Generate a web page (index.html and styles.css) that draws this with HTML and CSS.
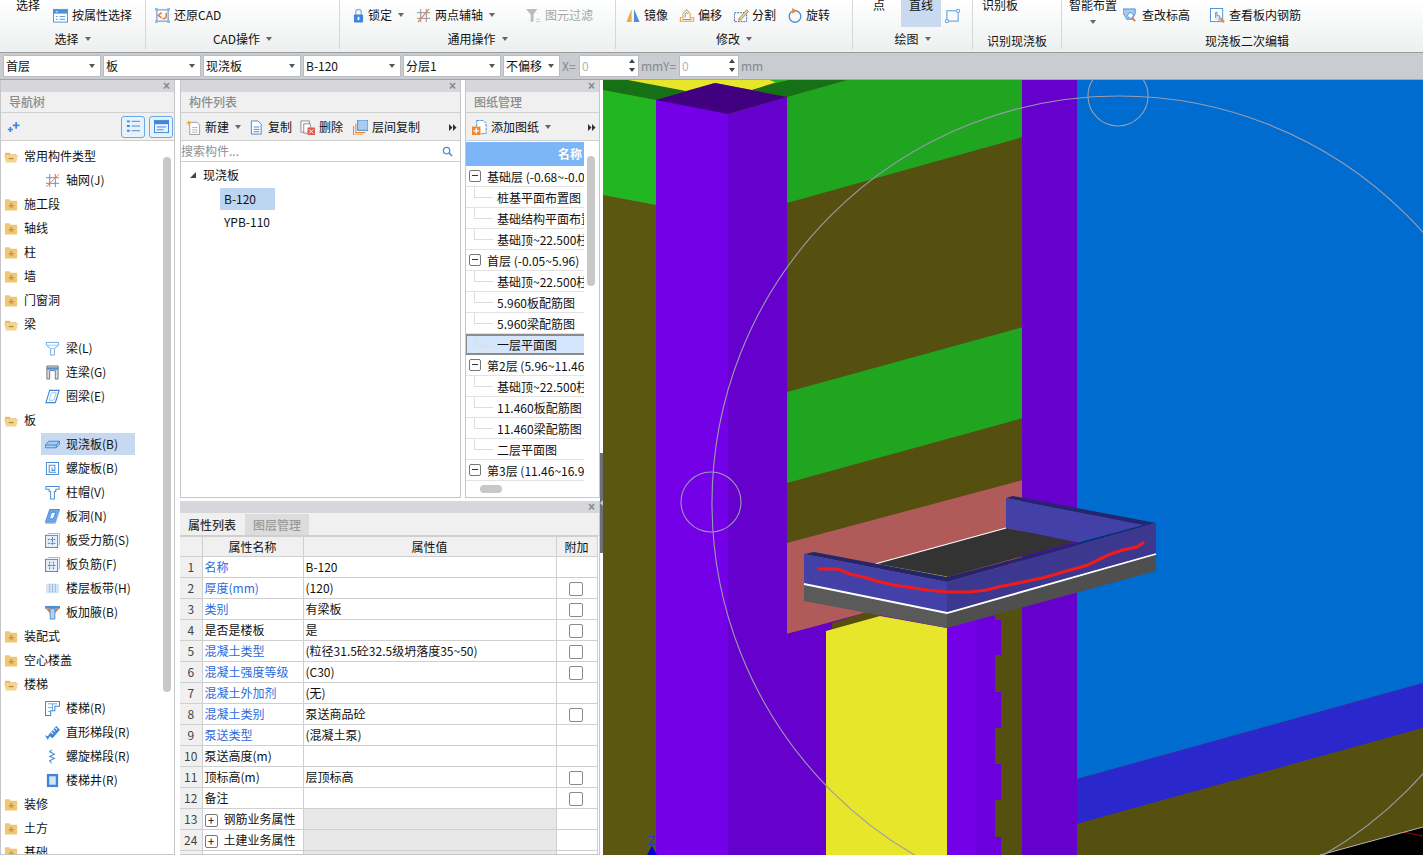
FILE: index.html
```html
<!DOCTYPE html>
<html lang="zh">
<head>
<meta charset="utf-8">
<title>现浇板</title>
<link rel="stylesheet" href="styles.css">
</head>
<body>
<svg class="defs" aria-hidden="true">
  <symbol id="fo" viewBox="0 0 16 13"><path d="M1 2.500h5l1 1.500h6v2H1z" fill="#e8bd6c"/><path d="M0 5h15l-2 8H2z" fill="#f3d491"/><path d="M5 8h5v1.400H5z" fill="#b98a35"/></symbol>
  <symbol id="fc" viewBox="0 0 16 13"><path d="M1 1h5l1 1.500h7V13H1z" fill="#efc877"/><path d="M7 5h1.600v2H10.500v1.500H8.600v2H7v-2H5V7h2z" fill="#c9973f"/></symbol>
  <symbol id="i-attr" viewBox="0 0 16 16"><rect x=".5" y="1.500" width="15" height="13.500" fill="#fff" stroke="#4a90d9"/><rect x="1" y="2" width="14" height="4" fill="#4a90d9"/><path d="M3 4h2" stroke="#fff"/><path d="M3 9h2M7 9h6M3 12h2M7 12h6" stroke="#4a90d9"/></symbol>
  <symbol id="i-cad" viewBox="0 0 16 16"><rect x="2" y="2" width="12" height="12" fill="none" stroke="#3f86d8"/><path d="M0 0h3v3H0zM13 0h3v3h-3zM0 13h3v3H0zM13 13h3v3h-3z" fill="#8cbbea"/><path d="M12 5v3.500q0 3-4 3M7 5L3.500 8 7 10.500" fill="none" stroke="#e8772a" stroke-width="1.600"/></symbol>
  <symbol id="i-lock" viewBox="0 0 12 16"><path d="M3 8V4.500a3 3 0 016 0V8" fill="none" stroke="#8cb7e4" stroke-width="1.500"/><rect x="1" y="7" width="10" height="8.500" rx="1" fill="#3f86d8"/><rect x="5" y="9.500" width="2" height="3.500" fill="#fff"/></symbol>
  <symbol id="i-axis" viewBox="0 0 16 16"><path d="M5 1v14M11 1v14M1 5h14M1 11h14" stroke="#8a8f98" stroke-width="1" fill="none"/><path d="M2 15L14 1" stroke="#ea7b45" stroke-width="1.200"/></symbol>
  <symbol id="i-filter" viewBox="0 0 16 16"><path d="M0 1h12L8 7v7l-3 1V7z" fill="#b9bcbf"/><path d="M11 12h4M11 14.500h4" stroke="#c8cacc"/></symbol>
  <symbol id="i-mirror" viewBox="0 0 16 16"><path d="M6.500 1v14H1z" fill="#f0ab3a"/><path d="M9 1v14h6z" fill="#4a90d9"/></symbol>
  <symbol id="i-offset" viewBox="0 0 18 16"><path d="M1.500 14.500v-4h3V6l4-4.500 4 4.500v4.500h4v4z" fill="none" stroke="#f0a030" stroke-width="1.200"/><path d="M4 12.500h10M7 10V6.500l1.500-2 2 2" fill="none" stroke="#4a90d9"/></symbol>
  <symbol id="i-split" viewBox="0 0 16 16"><rect x="1" y="5" width="13" height="9.500" fill="none" stroke="#3d5f92" stroke-dasharray="2 1"/><path d="M6 11L14 2l2 1.500L8 12.500 5.500 13z" fill="#f3d491" stroke="#77695a" stroke-width=".7"/></symbol>
  <symbol id="i-rotate" viewBox="0 0 16 16"><circle cx="8" cy="9" r="6.200" fill="none" stroke="#4a90d9" stroke-width="1.400"/><path d="M5 0l5 3-5 3z" fill="#ef8a2c"/></symbol>
  <symbol id="i-rect" viewBox="0 0 16 16"><rect x="2" y="3" width="12" height="11" fill="none" stroke="#4a90d9"/><path d="M.5 12.500h3v3h-3zM12.500 1.500h3v3h-3z" fill="#fff" stroke="#4a90d9" stroke-width=".8"/></symbol>
  <symbol id="i-check" viewBox="0 0 16 16"><path d="M0 1h13v5l-3 6H4L0 5z" fill="#a9c8ec" stroke="#4a90d9"/><circle cx="8" cy="8" r="3" fill="#fff" stroke="#4a90d9"/><path d="M10 11l3 3" stroke="#e8772a" stroke-width="2"/></symbol>
  <symbol id="i-view" viewBox="0 0 16 16"><rect x=".5" y=".5" width="13" height="14" fill="#fff" stroke="#4a90d9"/><path d="M6 11V4.500h1.500V8l3 .5V12l-2 2.500" fill="#d9e8f7" stroke="#6f8fb2"/><path d="M11 11l4 4" stroke="#ef8a2c" stroke-width="2.500"/></symbol>
  <symbol id="i-star" viewBox="0 0 18 14"><path d="M10 1h2v3h3v2h-3v3h-2V6H7V4h3z" fill="#3f86d8"/><path d="M3 7h2v2h2v2H5v2H3v-2H1V9h2z" fill="#3f86d8"/></symbol>
  <symbol id="i-list" viewBox="0 0 16 16"><path d="M1 2.500h3M1 7.500h3M1 12.500h3" stroke="#3f86d8" stroke-width="2"/><path d="M6 2.500h9M6 7.500h9M6 12.500h9" stroke="#3f86d8"/></symbol>
  <symbol id="i-win" viewBox="0 0 16 16"><rect x=".5" y="1.500" width="15" height="13" fill="none" stroke="#3f86d8"/><rect x="1" y="2" width="14" height="3.500" fill="#3f86d8"/><path d="M3 8.500h10M3 11.500h7" stroke="#3f86d8"/></symbol>
  <symbol id="i-new" viewBox="0 0 16 16"><path d="M4 2.500h8l2.500 3V15.500H4z" fill="#fff" stroke="#9a9a9a"/><path d="M6.500 8h6M6.500 10.500h6M6.500 13h6" stroke="#b5b5b5"/><path d="M3 0l.8 2.200L6 3 3.800 3.800 3 6l-.8-2.200L0 3l2.200-.8z" fill="#f0a030"/></symbol>
  <symbol id="i-copy" viewBox="0 0 16 16"><path d="M2.500 1h7l3.500 3.500v10.500H2.500z" fill="#fff" stroke="#3f86d8"/><path d="M5 7.500h6M5 10h6M5 12.500h6" stroke="#3f86d8"/></symbol>
  <symbol id="i-del" viewBox="0 0 16 16"><path d="M1 1h9v12H1z" fill="#fff" stroke="#8a8a8a"/><path d="M4 4h7v10H4z" fill="#fff" stroke="#8a8a8a"/><rect x="8" y="8" width="8" height="8" fill="#e05a50"/><path d="M9.800 10l4.400 4.400M14.200 10l-4.400 4.400" stroke="#fff"/></symbol>
  <symbol id="i-floor" viewBox="0 0 16 16"><rect x="5" y="0" width="11" height="11" fill="#a8cdf2" stroke="#3f86d8"/><path d="M3 4v9.500h10M.5 6.500V16h10" fill="none" stroke="#ef8a2c" stroke-width="1.200"/></symbol>
  <symbol id="i-add" viewBox="0 0 16 16"><path d="M5 .5h7l3 3v11H5z" fill="#fff" stroke="#3f86d8" stroke-dasharray="3 1"/><rect x="0" y="7" width="9" height="9" fill="#ef8a2c"/><path d="M4.500 8.500v6M1.500 11.500h6" stroke="#fff" stroke-width="1.400"/></symbol>
  <symbol id="i-more" viewBox="0 0 8 7"><path d="M0 0l3.500 3.500L0 7zM4 0l3.500 3.500L4 7z" fill="#333"/></symbol>
  <symbol id="t-grid" viewBox="0 0 16 16"><path d="M5 1v14M11 1v14M1 5h14M1 11h14" stroke="#4a90d9" fill="none"/><path d="M1 15L15 1" stroke="#ea8a5a"/></symbol>
  <symbol id="t-beam" viewBox="0 0 16 16"><path d="M1.500 1.500h13v3L10 8v7H6V8L1.500 4.500z" fill="#fff" stroke="#6aa5e4"/><path d="M2 4.500h12M6 8h4" stroke="#9cc4ee"/></symbol>
  <symbol id="t-lintel" viewBox="0 0 16 16"><path d="M2 15V1h12v14h-3V6H5v9z" fill="#d7dadd" stroke="#6f7780"/><rect x="2" y="2.500" width="12" height="2.500" fill="#4a90d9"/></symbol>
  <symbol id="t-ring" viewBox="0 0 16 16"><path d="M5 1.500h10L11 14.500H1z" fill="#fff" stroke="#3f86d8" stroke-width="1.200"/><path d="M7 4h5l-2.500 8h-5z" fill="none" stroke="#9cc4ee"/></symbol>
  <symbol id="t-slab" viewBox="0 0 16 16"><path d="M4 4.500h11.500v3L12 11.500H.5v-3z" fill="#a9cdf1" stroke="#3f86d8"/><path d="M.5 8.500H12l3.500-4M12 8.500v3" fill="none" stroke="#3f86d8"/></symbol>
  <symbol id="t-spiral" viewBox="0 0 16 16"><path d="M1.500 1.500h13v13h-13zM12 12H4.500V4.500h6V10H7.500V7" fill="none" stroke="#4a90d9" stroke-width="1.100"/></symbol>
  <symbol id="t-cap" viewBox="0 0 16 16"><path d="M1 1.500h14v3h-3.500V7H10v8H6V7H4.500V4.500H1z" fill="#fff" stroke="#4a90d9" stroke-width="1.100"/></symbol>
  <symbol id="t-hole" viewBox="0 0 16 16"><path d="M5 .5h10.500L11 14H.5z" fill="#6ea8e6" stroke="#3f86d8"/><path d="M7 3.500h4.500L9 10.500H4.500z" fill="#fff" stroke="#3f86d8"/><path d="M.5 14v1.500H11l4.500-14" fill="none" stroke="#9cc4ee"/></symbol>
  <symbol id="t-bar1" viewBox="0 0 16 16"><path d="M3 .5h12.500V13" fill="none" stroke="#8cbbea"/><rect x=".5" y="2.500" width="13" height="13" fill="#e4effa" stroke="#3f86d8"/><path d="M3 7h8M3 11h8M8 4.500v8" stroke="#3f6ea8" stroke-dasharray="2 1"/></symbol>
  <symbol id="t-bar2" viewBox="0 0 16 16"><path d="M3 .5h12.500V13" fill="none" stroke="#8cbbea"/><rect x=".5" y="2.500" width="13" height="13" fill="#e4effa" stroke="#3f86d8"/><path d="M5 5v8M9 5v8M3 9h8" stroke="#3f6ea8" stroke-dasharray="2 1"/></symbol>
  <symbol id="t-band" viewBox="0 0 16 16"><rect x="1" y="3" width="14" height="10" fill="#d6e5f6"/><path d="M5 3v10M8 3v10M11 3v10" stroke="#5f93cd" stroke-dasharray="1 1"/></symbol>
  <symbol id="t-haunch" viewBox="0 0 16 16"><path d="M0 1h16v3H0z" fill="#4a90d9"/><path d="M5.500 4v11h5V4z" fill="#b6d3f1" stroke="#4a90d9"/><path d="M1 4h4.500v5zM15 4h-4.500v5z" fill="#ef7c1c"/></symbol>
  <symbol id="t-stair" viewBox="0 0 16 16"><path d="M.5 15.500V.5h15v5h-5v5H6v5z" fill="#fff" stroke="#3f86d8" stroke-width="1.100"/><path d="M3 3h10M8 3v8M3 7h5M3 11h3" stroke="#6aa5e4"/></symbol>
  <symbol id="t-run" viewBox="0 0 16 16"><path d="M0 11l3 1 2-3 7-8 4 4-8 9-3-2-2 4z" fill="#3f86d8"/><path d="M6.500 7.500l2 2M8.500 5l2 2M11 3l2 2" stroke="#fff" stroke-width="1.200"/></symbol>
  <symbol id="t-spst" viewBox="0 0 16 16"><path d="M7 1L5 3l5 2.500-5 2.500 5 2-5 2.500L7 15" fill="none" stroke="#3f86d8" stroke-width="1.100"/></symbol>
  <symbol id="t-well" viewBox="0 0 16 16"><rect x="2" y="1" width="12" height="14" fill="#3f86d8"/><rect x="4.500" y="3.500" width="7" height="9" fill="#d6e5f6"/></symbol>
</svg>

<div class="app">
  <header class="ribbon">
    <section class="group g1">
      <div class="body">
        <span class="big">选择</span>
        <span class="item mi13"><svg class="ic"><use href="#i-attr"/></svg>按属性选择</span>
      </div>
      <div class="label">选择<i class="arrow"></i></div>
    </section>
    <section class="group g2">
      <div class="body"><span class="item"><svg class="ic"><use href="#i-cad"/></svg>还原CAD</span></div>
      <div class="label">CAD操作<i class="arrow"></i></div>
    </section>
    <section class="group g3">
      <div class="body">
        <span class="item"><svg class="ic narrow"><use href="#i-lock"/></svg>锁定<i class="arrow a2"></i></span>
        <span class="item mi12"><svg class="ic"><use href="#i-axis"/></svg>两点辅轴<i class="arrow a2"></i></span>
        <span class="item mi31 off"><svg class="ic"><use href="#i-filter"/></svg>图元过滤</span>
      </div>
      <div class="label">通用操作<i class="arrow"></i></div>
    </section>
    <section class="group g4">
      <div class="body">
        <span class="item tight"><svg class="ic wide"><use href="#i-mirror"/></svg>镜像</span>
        <span class="item tight mi11"><svg class="ic wide"><use href="#i-offset"/></svg>偏移</span>
        <span class="item tight mi11"><svg class="ic wide"><use href="#i-split"/></svg>分割</span>
        <span class="item tight mi11"><svg class="ic wide"><use href="#i-rotate"/></svg>旋转</span>
      </div>
      <div class="label">修改<i class="arrow"></i></div>
    </section>
    <section class="group g5">
      <div class="body">
        <span class="big">点</span>
        <span class="big active">直线</span>
        <span class="item mi4"><svg class="ic"><use href="#i-rect"/></svg></span>
      </div>
      <div class="label">绘图<i class="arrow"></i></div>
    </section>
    <section class="group g6">
      <div class="body"><span class="big">识别板</span></div>
      <div class="label low">识别现浇板</div>
    </section>
    <section class="group g7">
      <div class="body">
        <span class="big stack">智能布置<i class="arrow"></i></span>
        <span class="item mi6"><svg class="ic"><use href="#i-check"/></svg>查改标高</span>
        <span class="item mi20"><svg class="ic"><use href="#i-view"/></svg>查看板内钢筋</span>
      </div>
      <div class="label low shift">现浇板二次编辑</div>
    </section>
  </header>

  <div class="toolbar">
    <div class="select">首层<i class="arrow"></i></div>
    <div class="select">板<i class="arrow"></i></div>
    <div class="select">现浇板<i class="arrow"></i></div>
    <div class="select">B-120<i class="arrow"></i></div>
    <div class="select">分层1<i class="arrow"></i></div>
    <div class="select short">不偏移<i class="arrow"></i></div>
    <span class="tb-label lx">X=</span>
    <div class="spin">0<span class="spin-arrows"><i class="up"></i><i class="down"></i></span></div>
    <span class="tb-label ly">mmY=</span>
    <div class="spin">0<span class="spin-arrows"><i class="up"></i><i class="down"></i></span></div>
    <span class="tb-label">mm</span>
  </div>

  <main class="main">
    <aside class="panel nav">
      <div class="strip"><span class="close">×</span></div>
      <div class="phead">导航树</div>
      <div class="ptools nav-tools">
        <svg class="stars"><use href="#i-star"/></svg>
        <span class="tbtn"><svg class="ic"><use href="#i-list"/></svg></span>
        <span class="tbtn"><svg class="ic"><use href="#i-win"/></svg></span>
      </div>
      <div class="nav-body">
        <ul class="tree">
          <li class="l0"><svg class="fold"><use href="#fo"/></svg>常用构件类型</li>
          <li class="l1"><svg class="ic"><use href="#t-grid"/></svg>轴网(J)</li>
          <li class="l0"><svg class="fold"><use href="#fc"/></svg>施工段</li>
          <li class="l0"><svg class="fold"><use href="#fc"/></svg>轴线</li>
          <li class="l0"><svg class="fold"><use href="#fc"/></svg>柱</li>
          <li class="l0"><svg class="fold"><use href="#fc"/></svg>墙</li>
          <li class="l0"><svg class="fold"><use href="#fc"/></svg>门窗洞</li>
          <li class="l0"><svg class="fold"><use href="#fo"/></svg>梁</li>
          <li class="l1"><svg class="ic"><use href="#t-beam"/></svg>梁(L)</li>
          <li class="l1"><svg class="ic"><use href="#t-lintel"/></svg>连梁(G)</li>
          <li class="l1"><svg class="ic"><use href="#t-ring"/></svg>圈梁(E)</li>
          <li class="l0"><svg class="fold"><use href="#fo"/></svg>板</li>
          <li class="l1 sel"><svg class="ic"><use href="#t-slab"/></svg>现浇板(B)</li>
          <li class="l1"><svg class="ic"><use href="#t-spiral"/></svg>螺旋板(B)</li>
          <li class="l1"><svg class="ic"><use href="#t-cap"/></svg>柱帽(V)</li>
          <li class="l1"><svg class="ic"><use href="#t-hole"/></svg>板洞(N)</li>
          <li class="l1"><svg class="ic"><use href="#t-bar1"/></svg>板受力筋(S)</li>
          <li class="l1"><svg class="ic"><use href="#t-bar2"/></svg>板负筋(F)</li>
          <li class="l1"><svg class="ic"><use href="#t-band"/></svg>楼层板带(H)</li>
          <li class="l1"><svg class="ic"><use href="#t-haunch"/></svg>板加腋(B)</li>
          <li class="l0"><svg class="fold"><use href="#fc"/></svg>装配式</li>
          <li class="l0"><svg class="fold"><use href="#fc"/></svg>空心楼盖</li>
          <li class="l0"><svg class="fold"><use href="#fo"/></svg>楼梯</li>
          <li class="l1"><svg class="ic"><use href="#t-stair"/></svg>楼梯(R)</li>
          <li class="l1"><svg class="ic"><use href="#t-run"/></svg>直形梯段(R)</li>
          <li class="l1"><svg class="ic"><use href="#t-spst"/></svg>螺旋梯段(R)</li>
          <li class="l1"><svg class="ic"><use href="#t-well"/></svg>楼梯井(R)</li>
          <li class="l0"><svg class="fold"><use href="#fc"/></svg>装修</li>
          <li class="l0"><svg class="fold"><use href="#fc"/></svg>土方</li>
          <li class="l0"><svg class="fold"><use href="#fc"/></svg>基础</li>
        </ul>
        <div class="vtrack"><div class="vthumb"></div></div>
      </div>
    </aside>

    <div class="mid">
      <div class="mid-top">
        <section class="panel comp">
          <div class="strip"><span class="close">×</span></div>
          <div class="phead">构件列表</div>
          <div class="ptools comp-tools">
            <span class="item"><svg class="ic"><use href="#i-new"/></svg>新建<i class="arrow a2"></i></span>
            <span class="item"><svg class="ic"><use href="#i-copy"/></svg>复制</span>
            <span class="item"><svg class="ic"><use href="#i-del"/></svg>删除</span>
            <span class="item last"><svg class="ic"><use href="#i-floor"/></svg>层间复制</span>
            <svg class="more"><use href="#i-more"/></svg>
          </div>
          <div class="search">搜索构件...
            <svg class="mag" viewBox="0 0 12 12"><circle cx="5" cy="5" r="3.500" fill="none" stroke="#4a90d9" stroke-width="1.400"/><path d="M7.500 7.500L11 11" stroke="#4a90d9" stroke-width="1.600"/></svg>
          </div>
          <div class="comp-tree">
            <div class="ct-root"><i class="tri"></i>现浇板</div>
            <div class="ct-item on">B-120</div>
            <div class="ct-item">YPB-110</div>
          </div>
        </section>

        <section class="panel draw">
          <div class="strip"><span class="close">×</span></div>
          <div class="phead">图纸管理</div>
          <div class="ptools draw-tools">
            <span class="item"><svg class="ic"><use href="#i-add"/></svg>添加图纸<i class="arrow a2"></i></span>
            <svg class="more"><use href="#i-more"/></svg>
          </div>
          <div class="draw-body">
            <div class="draw-main">
              <div class="draw-head">名称</div>
              <div class="dr top"><b class="mbox"></b>基础层 (-0.68~-0.05)</div>
              <div class="dr">桩基平面布置图</div>
              <div class="dr">基础结构平面布置图</div>
              <div class="dr">基础顶~22.500柱配筋图</div>
              <div class="dr top"><b class="mbox"></b>首层 (-0.05~5.96)</div>
              <div class="dr">基础顶~22.500柱配筋图</div>
              <div class="dr">5.960板配筋图</div>
              <div class="dr">5.960梁配筋图</div>
              <div class="dr cur">一层平面图</div>
              <div class="dr top"><b class="mbox"></b>第2层 (5.96~11.46)</div>
              <div class="dr">基础顶~22.500柱配筋图</div>
              <div class="dr">11.460板配筋图</div>
              <div class="dr">11.460梁配筋图</div>
              <div class="dr">二层平面图</div>
              <div class="dr top"><b class="mbox"></b>第3层 (11.46~16.96)</div>
              <div class="hthumb"></div>
            </div>
            <div class="dtrack"><div class="dthumb"></div></div>
          </div>
        </section>
      </div>

      <section class="panel props">
        <div class="strip"><span class="close">×</span></div>
        <div class="tabs"><span class="tab on">属性列表</span><span class="tab">图层管理</span></div>
        <table class="ptable">
          <colgroup><col class="c0"><col class="c1"><col class="c2"><col class="c3"></colgroup>
          <tr class="head"><th></th><th>属性名称</th><th>属性值</th><th>附加</th></tr>
          <tr><td class="n">1</td><td class="link">名称</td><td>B-120</td><td></td></tr>
          <tr><td class="n">2</td><td class="link">厚度(mm)</td><td>(120)</td><td><b class="cb"></b></td></tr>
          <tr><td class="n">3</td><td class="link">类别</td><td>有梁板</td><td><b class="cb"></b></td></tr>
          <tr><td class="n">4</td><td>是否是楼板</td><td>是</td><td><b class="cb"></b></td></tr>
          <tr><td class="n">5</td><td class="link">混凝土类型</td><td>(粒径31.5砼32.5级坍落度35~50)</td><td><b class="cb"></b></td></tr>
          <tr><td class="n">6</td><td class="link">混凝土强度等级</td><td>(C30)</td><td><b class="cb"></b></td></tr>
          <tr><td class="n">7</td><td class="link">混凝土外加剂</td><td>(无)</td><td></td></tr>
          <tr><td class="n">8</td><td class="link">混凝土类别</td><td>泵送商品砼</td><td><b class="cb"></b></td></tr>
          <tr><td class="n">9</td><td class="link">泵送类型</td><td>(混凝土泵)</td><td></td></tr>
          <tr><td class="n">10</td><td>泵送高度(m)</td><td></td><td></td></tr>
          <tr><td class="n">11</td><td>顶标高(m)</td><td>层顶标高</td><td><b class="cb"></b></td></tr>
          <tr><td class="n">12</td><td>备注</td><td></td><td><b class="cb"></b></td></tr>
          <tr><td class="n">13</td><td><b class="pbox">+</b>钢筋业务属性</td><td class="shade"></td><td></td></tr>
          <tr><td class="n">24</td><td><b class="pbox">+</b>土建业务属性</td><td class="shade"></td><td></td></tr>
          <tr><td class="n">31</td><td><b class="pbox">+</b>显示样式</td><td class="shade"></td><td></td></tr>
        </table>
      </section>
    </div>

    <div class="splitter"><div class="handle"><i></i></div></div>

    <svg class="view" viewBox="603 80 820 775" preserveAspectRatio="none">
      <rect x="603" y="80" width="820" height="775" fill="#5b5713"/>
      <rect x="787" y="80" width="236" height="775" fill="#55500f"/>
      <!-- back left floor -->
      <polygon points="603,80 628,80 686,91 656,100 603,90" fill="#167016"/>
      <polygon points="628,80 770,80 777,82 752,90 715,83 686,91" fill="#e8e62a"/>
      <polygon points="770,80 790,80 777,83" fill="#22b722"/>
      <polygon points="752,90 777,83 790,80 847,80 787,97" fill="#167016"/>
      <polygon points="603,90 656,100 656,205 603,195" fill="#22b722"/>
      <!-- back wall bands -->
      <polygon points="787,97 847,80 1023,80 1023,137 787,203" fill="#20a520"/>
      <polygon points="787,392 1023,327 1023,418 787,483" fill="#20a520"/>
      <polygon points="787,543 1023,480 1023,571 787,634" fill="#b15a5a"/>
      <!-- front column -->
      <rect x="656" y="100" width="72" height="755" fill="#7300e6"/>
      <polygon points="728,114 787,97 787,634 826,624 826,855 728,855" fill="#6600cc"/>
      <polygon points="656,100 715,83 787,97 728,114" fill="#400080"/>
      <polygon points="787,634 1023,570 1023,855 787,855" fill="#6600cc"/>
      <!-- far wall & blue -->
      <rect x="1022" y="80" width="56" height="775" fill="#6600cc"/>
      <polygon points="1077,80 1423,80 1423,683 1077,779" fill="#006ccf"/>
      <polygon points="1077,779 1423,683 1423,728 1077,824" fill="#2a27cc"/>
      <polygon points="1077,824 1423,728 1423,855 1077,855" fill="#55500f"/>
      <polygon points="1320,855 1423,827 1423,855" fill="#000"/>
      <path d="M1403 832l20 4" stroke="#b00000" stroke-width="1" fill="none"/>
      <path d="M1320 855L1423 827" stroke="#b5b5b5" stroke-width="1" fill="none"/>
      <!-- lower column -->
      <polygon points="832,623 880,608 880,616 832,630" fill="#55500f"/>
      <polygon points="826,631 880,616 947,628 947,855 826,855" fill="#e8e62a"/>
      <rect x="947" y="610" width="29" height="245" fill="#7300e6"/>
      <rect x="976" y="610" width="25" height="245" fill="#6c00dc"/>
      <rect x="1001" y="608" width="21" height="247" fill="#55500f"/>
      <path d="M995 612h6v8h-6zM995 655h6v37h-6zM995 728h6v36h-6zM995 800h6v37h-6z" fill="#55500f"/>
      <!-- circles -->
      <g fill="none" stroke="#9a9cae" stroke-width="1.100">
        <circle cx="1119" cy="503" r="407"/>
        <circle cx="711" cy="502" r="30"/>
        <circle cx="1118" cy="96" r="30"/>
      </g>
      <!-- balcony slab -->
      <polygon points="1006,498 1143,525 1075,542 1006,528" fill="#4340a8"/>
      <polygon points="1006,498 1013,496 1156,523 1143,525" fill="#25256b"/>
      <polygon points="1006,528 1075,542 947,577 875,564" fill="#333"/>
      <path d="M875 564L1006 528" stroke="#fff" stroke-width="1.200" fill="none"/>
      <path d="M875 564L947 577" stroke="#c9c850" stroke-width="1" fill="none"/>
      <polygon points="804,554 814,552 947,577 947,582" fill="#25256b"/>
      <polygon points="947,577 1143,525 1156,523 947,582" fill="#25256b"/>
      <polygon points="804,554 947,582 947,613 804,584" fill="#4340a8"/>
      <polygon points="947,582 1156,523 1156,554 947,613" fill="#3c388f"/>
      <polygon points="804,584 947,613 947,628 804,601" fill="#5a5a5a"/>
      <polygon points="947,613 1156,554 1156,571 947,628" fill="#4f4f4f"/>
      <path d="M804 584L947 613L1156 554" stroke="#fff" stroke-width="1.800" fill="none"/>
      <path d="M818 569L838 569L850 574L863 577L877 581L893 585L907 587L927 590L947 592L970 592L987 590L998 587L1013 584L1028 581L1042 578L1053 575L1070 570L1088 565L1108 555L1123 550L1137 547L1144 542" stroke="#f01c1c" stroke-width="3.200" fill="none"/>
      <!-- axis -->
      <text class="zlabel" x="648" y="845">Z</text>
      <polygon points="652,846 657,855 647,855" fill="#0000e0"/>
    </svg>
  </main>
</div>
</body>
</html>
```
FILE: styles.css
```css
* { box-sizing: border-box; }
html, body { margin: 0; padding: 0; height: 100%; overflow: hidden; }
body { font: 12px/16px "Noto Sans CJK SC", "Noto Sans", sans-serif; color: #111; background: #fff; }
.defs { display: none; }
.app { width: 1423px; height: 855px; display: flex; flex-direction: column; overflow: hidden; }
i { display: block; font-style: normal; }
b { font-weight: normal; }

/* ribbon */
.ribbon { display: flex; height: 53px; flex: none; background: linear-gradient(#fff, #edf0f0); border-bottom: 1px solid #9c9c9c; }
.group { height: 49px; border-right: 1px solid #d6d8d8; flex: none; }
.g1 { width: 146px; } .g2 { width: 194px; } .g3 { width: 276px; } .g4 { width: 237px; } .g5 { width: 120px; } .g6 { width: 89px; }
.g7 { flex: 1; border-right: 0; }
.body { height: 30px; display: flex; align-items: center; }
.g1 .body { padding-left: 16px; } .g2 .body { padding-left: 9px; } .g3 .body { padding-left: 13px; }
.g4 .body { padding-left: 9px; } .g5 .body { padding-left: 20px; } .g6 .body { padding-left: 9px; } .g7 .body { padding-left: 7px; }
.big { align-self: flex-start; line-height: 12px; margin-top: -1px; height: 28px; flex: none; }
.big.active { width: 40px; margin-left: 16px; text-align: center; background: #c8d9f0; }
.big.stack { display: flex; flex-direction: column; align-items: center; }
.big.stack .arrow { margin: 9px 0 0; }
.item { display: flex; align-items: center; gap: 4px; flex: none; }
.item.tight { gap: 3px; }
.item.off { color: #a6a6a6; }
.mi4 { margin-left: 4px; } .mi6 { margin-left: 6px; } .mi11 { margin-left: 11px; } .mi12 { margin-left: 12px; }
.mi13 { margin-left: 13px; } .mi20 { margin-left: 20px; } .mi31 { margin-left: 31px; }
.ic { width: 15px; height: 15px; flex: none; display: block; }
.ic.narrow { width: 11px; }
.ic.wide { width: 16px; }
.label { height: 19px; margin-top: -1px; display: flex; align-items: center; justify-content: center; gap: 6px; }
.label.low { padding-top: 4px; }
.label.shift { margin-left: 9px; }
.arrow { width: 0; height: 0; border: 3.500px solid transparent; border-top: 4px solid #666; border-bottom: 0; flex: none; }
.arrow.a2 { margin-left: 2px; border-width: 3px; border-top-width: 4px; border-bottom-width: 0; }

/* toolbar */
.toolbar { height: 27px; flex: none; display: flex; align-items: center; gap: 2px; padding: 0 0 1px 3px; background: #c9ccd0; border-bottom: 1px solid #a4a6a8; }
.select { width: 98px; height: 22px; background: #fff; border: 1px solid #b9bcc0; padding-left: 2px; display: flex; align-items: center; justify-content: space-between; flex: none; line-height: 20px; }
.select.short { width: 57px; }
.select .arrow { margin-right: 5px; border-width: 3px; border-top-width: 4px; border-bottom-width: 0; border-top-color: #555; }
.tb-label { color: #858890; flex: none; }
.tb-label.lx { width: 15px; }
.tb-label.ly { width: 36px; }
.spin { width: 60px; height: 22px; background: #fff; border: 1px solid #b9bcc0; padding-left: 2px; color: #b5b5b5; display: flex; align-items: center; justify-content: space-between; line-height: 20px; flex: none; }
.spin-arrows { display: flex; flex-direction: column; gap: 5px; margin-right: 3px; }
.up { width: 0; height: 0; border: 3px solid transparent; border-bottom: 4px solid #444; border-top: 0; }
.down { width: 0; height: 0; border: 3px solid transparent; border-top: 4px solid #444; border-bottom: 0; }

/* main */
.main { flex: 1; min-height: 0; display: flex; }
.panel { display: flex; flex-direction: column; background: #fff; border: 1px solid #c4c6c8; border-top: 0; overflow: hidden; }
.strip { height: 12px; flex: none; background: #d5d7da; display: flex; justify-content: flex-end; align-items: center; padding-right: 4px; }
.close { color: #85888c; font: bold 12px/12px "Liberation Sans", sans-serif; }
.phead { height: 21px; flex: none; background: #f0f0f0; border-bottom: 1px solid #cfcfcf; color: #8c8c8c; padding-left: 8px; line-height: 20px; font-weight: 500; }
.ptools { height: 28px; flex: none; background: #f0f0f0; border-bottom: 1px solid #cfcfcf; display: flex; align-items: center; padding-top: 1px; }

/* nav */
.nav { width: 175px; flex: none; }
.nav-tools { padding: 0 1px 0 6px; gap: 4px; }
.stars { width: 15px; height: 12px; margin-right: auto; }
.tbtn { width: 24px; height: 22px; border: 1px solid #6aa8ea; border-radius: 3px; background: #e8f2fc; display: flex; align-items: center; justify-content: center; }
.nav-body { flex: 1; min-height: 0; display: flex; overflow: hidden; }
.tree { list-style: none; margin: 0; padding: 3px 0 0; flex: 1; min-width: 0; }
.tree li { height: 24px; display: flex; align-items: center; white-space: nowrap; }
.l0 { padding-left: 3px; gap: 5px; }
.l1 { padding-left: 44px; gap: 6px; }
.l1.sel { background: linear-gradient(#c7d9f1, #c7d9f1) 40px 1px / 94px 22px no-repeat; }
.fold { width: 15px; height: 13px; flex: none; }
.vtrack { width: 11px; flex: none; padding-top: 16px; }
.vthumb { width: 8px; height: 535px; border-radius: 4px; background: #c8c8c8; }

/* middle */
.mid { width: 420px; flex: none; margin-left: 5px; display: flex; flex-direction: column; gap: 3px; }
.mid-top { height: 418px; flex: none; display: flex; gap: 4px; }
.comp { width: 281px; flex: none; }
.draw { flex: 1; min-width: 0; }
.comp-tools { padding-left: 5px; gap: 8px; }
.comp-tools .last { margin-left: 2px; }
.more { margin-left: auto; margin-right: 3px; flex: none; width: 8px; height: 7px; }
.search { height: 21px; flex: none; border-bottom: 1px solid #cfcfcf; color: #8f8f8f; line-height: 20px; display: flex; justify-content: space-between; align-items: center; }
.mag { width: 11px; height: 11px; margin-right: 7px; }
.comp-tree { flex: 1; padding-top: 1px; }
.ct-root { height: 24px; display: flex; align-items: center; padding-left: 9px; gap: 7px; }
.tri { width: 0; height: 0; border-style: solid; border-width: 0 0 6px 6px; border-color: transparent transparent #444 transparent; }
.ct-item { height: 24px; margin-left: 39px; line-height: 24px; padding-left: 4px; width: 55px; white-space: nowrap; }
.ct-item.on { background: #bcd5f0; height: 22px; line-height: 22px; margin-top: 1px; }
.draw-tools { padding-left: 6px; }
.draw-body { flex: 1; min-height: 0; display: flex; }
.draw-main { width: 118px; flex: none; overflow: hidden; }
.draw-head { height: 24px; margin-top: 1px; background: #7db6f8; color: #fff; font-weight: bold; text-align: right; padding-right: 2px; line-height: 24px; }
.dr { height: 21px; border-bottom: 1px solid #e2e2e2; line-height: 21px; padding-left: 31px; white-space: nowrap; overflow: hidden; position: relative; }
.dr::before { content: ""; position: absolute; left: 8px; top: -1px; width: 18px; height: 11px; border-left: 1px solid #ddd; border-bottom: 1px solid #ddd; }
.dr.top { padding: 1px 0 0 21px; display: flex; align-items: center; }
.dr.top::before { display: none; }
.dr.cur { background: #d4e6fb; border-top: 2px solid #8c8c8c; border-bottom: 2px solid #8c8c8c; border-left: 1px solid #8c8c8c; line-height: 17px; padding-left: 30px; }
.mbox { position: absolute; left: 3px; top: 4px; width: 12px; height: 12px; border: 1px solid #777; border-radius: 2px; background: #fff; }
.mbox::after { content: ""; position: absolute; left: 2px; top: 4px; width: 6px; height: 1px; background: #333; }
.hthumb { width: 22px; height: 8px; margin: 4px 0 0 14px; border-radius: 4px; background: #c8c8c8; }
.dtrack { flex: 1; padding: 15px 0 0 3px; }
.dthumb { width: 8px; height: 130px; border-radius: 4px; background: #c8c8c8; }

/* properties */
.props { flex: 1; min-height: 0; border-left: 0; }
.tabs { height: 23px; flex: none; display: flex; background: #f0f0f0; border-bottom: 1px solid #cfcfcf; padding-top: 1px; gap: 1px; }
.tab { width: 64px; text-align: center; line-height: 21px; background: #dcdcdc; color: #9a9a9a; font-weight: 500; }
.tab.on { background: #f0f0f0; color: #333; }
.ptable { border-collapse: collapse; table-layout: fixed; width: 417px; }
.c0 { width: 22px; } .c1 { width: 101px; } .c2 { width: 253px; } .c3 { width: 41px; }
.ptable td, .ptable th { height: 21px; padding: 0 0 0 2px; border: 1px solid #cfcfcf; font-weight: normal; white-space: nowrap; overflow: hidden; line-height: 16px; }
.ptable tr > :first-child { border-left: 0; }
.ptable tr > :last-child { text-align: center; padding: 0; }
.ptable .head th { height: 20px; text-align: center; background: #f0f0f0; padding: 0; }
.ptable td.n { background: #f0f0f0; text-align: center; padding: 0; color: #444; }
.link { color: #2a6be0; }
.shade { background: #e8e8e8; }
.cb { display: inline-block; width: 14px; height: 14px; border: 1px solid #8a8a8a; border-radius: 2px; vertical-align: middle; background: #fff; margin-right: 2px; }
.pbox { display: inline-block; width: 13px; height: 13px; border: 1px solid #777; border-radius: 2px; margin: 0 6px 0 0; text-align: center; line-height: 10px; vertical-align: -1px; background: #fff; }

/* viewport */
.splitter { width: 3px; flex: none; padding-top: 373px; }
.handle { width: 3px; height: 100px; background: #6a6f7c; display: flex; align-items: center; }
.handle i { width: 0; height: 0; border: 3px solid transparent; border-right-color: #c8c8c8; border-left: 0; }
.view { width: 820px; height: 775px; flex: none; display: block; }
.zlabel { font: 12px "Liberation Sans", sans-serif; fill: #1a3ae0; }
```
